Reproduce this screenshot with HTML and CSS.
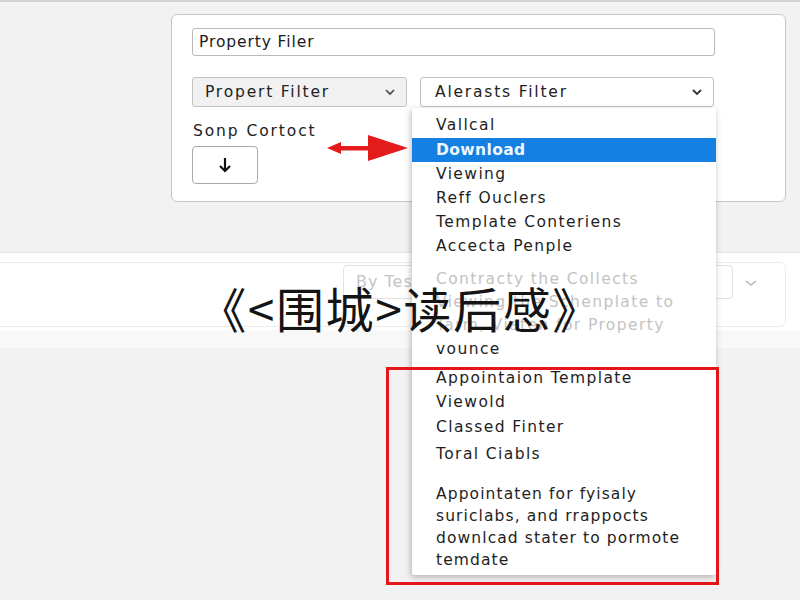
FILE: index.html
```html
<!DOCTYPE html>
<html>
<head>
<meta charset="utf-8">
<link rel="stylesheet" href="styles.css">
</head>
<body>
<div class="top">
  <div class="card">
    <div class="text-input">Property Filer</div>
    <div class="select-row">
      <div class="select select-gray"><span>Propert Filter</span>
        <svg class="chev" width="12" height="8" viewBox="0 0 12 8"><polyline points="2,2 6,6 10,2" fill="none" stroke="#444" stroke-width="1.6"/></svg>
      </div>
      <div class="select select-white"><span>Alerasts Filter</span>
        <svg class="chev" width="12" height="8" viewBox="0 0 12 8"><polyline points="2,2 6,6 10,2" fill="none" stroke="#333" stroke-width="1.8"/></svg>
        <div class="dropdown">
          <div class="opt first">Vallcal</div>
          <div class="opt active">Download</div>
          <div class="opt">Viewing</div>
          <div class="opt">Reff Ouclers</div>
          <div class="opt">Template Conteriens</div>
          <div class="opt">Accecta Penple</div>
          <div class="faded-group">
            <div class="opt faded">Contracty the Collects</div>
            <div class="opt faded">Viewing the Schenplate to</div>
            <div class="opt faded">Tarm, Viaten for Property</div>
          </div>
          <div class="opt">vounce</div>
          <div class="opt gap5">Appointaion Template</div>
          <div class="opt">Viewold</div>
          <div class="opt gap1">Classed Finter</div>
          <div class="opt gap3">Toral Ciabls</div>
          <div class="para">Appointaten for fyisaly<br>suriclabs, and rrappocts<br>downlcad stater to pormote<br>temdate</div>
        </div>
      </div>
    </div>
    <div class="label">Sonp Cortoct</div>
    <div class="btn">
      <svg width="16" height="18" viewBox="0 0 16 18"><line x1="8" y1="2" x2="8" y2="15" stroke="#111" stroke-width="2.2"/><polyline points="3,10 8,15 13,10" fill="none" stroke="#111" stroke-width="2.2"/></svg>
    </div>
  </div>
</div>
<div class="band">
  <div class="band-card">
    <div class="faint-input">By Tes</div>
    <svg class="faint-chev" width="14" height="8" viewBox="0 0 14 8"><polyline points="2,2 7,6 12,2" fill="none" stroke="#b5b5b5" stroke-width="1.6"/></svg>
  </div>
</div>
<div class="strip"></div>

<svg class="red-arrow" width="90" height="32" viewBox="0 0 90 32">
  <polygon points="2,16 16,10 16,22" fill="#e31b1b"/>
  <rect x="14" y="14" width="31" height="4.5" fill="#e31b1b"/>
  <polygon points="43,3 83,16 43,29" fill="#e31b1b"/>
</svg>
<div class="red-box"></div>
<div class="title">《&lt;围城&gt;读后感》</div>
</body>
</html>
```

FILE: styles.css
```css
html, body {
  margin: 0;
  padding: 0;
}
body {
  width: 800px;
  height: 600px;
  overflow: hidden;
  background: #f2f2f2;
  border-top: 2px solid #d2d2d2;
  box-sizing: border-box;
  position: relative;
  font-family: "DejaVu Sans", "Liberation Sans", sans-serif;
  color: #222;
}
.top {
  padding: 12px 14px 0 171px;
}
.card {
  width: 615px;
  height: 188px;
  box-sizing: border-box;
  background: #fff;
  border: 1px solid #c6c6c6;
  border-radius: 6px;
  padding: 13px 20px 0 20px;
}
.text-input {
  width: 523px;
  height: 28px;
  box-sizing: border-box;
  border: 1px solid #b9b9b9;
  border-radius: 3px;
  font-size: 15.5px;
  letter-spacing: 0.9px;
  line-height: 26px;
  padding-left: 6px;
  color: #1a1a1a;
}
.select-row {
  display: flex;
  gap: 13px;
  margin-top: 21px;
}
.select {
  height: 30px;
  box-sizing: border-box;
  border: 1px solid #c3c3c3;
  border-radius: 3px;
  display: flex;
  align-items: center;
  justify-content: space-between;
  font-size: 15.5px;
  letter-spacing: 1.8px;
  position: relative;
}
.select-gray {
  width: 215px;
  background: #f1f1f1;
  padding: 0 10px 0 12px;
}
.select-white {
  width: 294px;
  background: #fff;
  padding: 0 10px 0 14px;
}
.chev {
  display: block;
}
.label {
  margin-top: 14px;
  font-size: 15.5px;
  letter-spacing: 1.9px;
  line-height: 20px;
  padding-left: 1px;
}
.btn {
  margin-top: 5px;
  width: 66px;
  height: 38px;
  box-sizing: border-box;
  border: 1px solid #a9a9a9;
  border-radius: 4px;
  display: flex;
  align-items: center;
  justify-content: center;
}
.dropdown {
  position: absolute;
  left: -9px;
  top: 30px;
  width: 304px;
  height: 467px;
  box-sizing: border-box;
  background: #fff;
  box-shadow: -1px 2px 6px rgba(0,0,0,0.28);
  border-radius: 2px;
  padding-top: 5px;
  z-index: 5;
  letter-spacing: 1.4px;
  font-size: 15.5px;
  color: #1e1e1e;
}
.opt {
  height: 24px;
  line-height: 24px;
  padding-left: 24px;
  white-space: nowrap;
}
.opt.first {
  height: 25px;
}
.opt.active {
  background: #1380e2;
  color: #eef6ff;
  font-weight: bold;
  letter-spacing: 0.4px;
}
.faded-group {
  margin-top: 10px;
}
.opt.faded {
  height: 23px;
  line-height: 23px;
  color: #c3c3c3;
}
.gap5 { margin-top: 5px; }
.gap1 { margin-top: 1px; }
.gap3 { margin-top: 3px; }
.para {
  margin-top: 17px;
  padding-left: 24px;
  line-height: 22px;
  letter-spacing: 1.1px;
}
.band {
  margin-top: 50px;
  border-top: 1px solid #e3e3e3;
  background: #fff;
  padding: 9px 14px 3px 0;
}
.band-card {
  height: 65px;
  box-sizing: border-box;
  border: 1px solid #ececec;
  border-left: none;
  border-radius: 0 6px 6px 0;
  display: flex;
  align-items: flex-start;
  padding: 2px 0 0 343px;
}
.faint-input {
  width: 390px;
  height: 34px;
  box-sizing: border-box;
  border: 1px solid #e2e2e2;
  border-radius: 4px;
  font-size: 16px;
  letter-spacing: 1px;
  color: #c4c4c4;
  line-height: 32px;
  padding-left: 12px;
}
.faint-chev {
  margin: 14px 0 0 11px;
}
.strip {
  height: 18px;
  background: #f8f8f8;
}
.red-arrow {
  position: absolute;
  left: 325px;
  top: 130px;
  z-index: 6;
}
.red-box {
  position: absolute;
  left: 386px;
  top: 365px;
  width: 333px;
  height: 218px;
  box-sizing: border-box;
  border: 3px solid #e3161a;
  z-index: 6;
}
.title {
  position: absolute;
  left: 0;
  right: 0;
  top: 279px;
  text-align: center;
  font-family: "Noto Sans CJK SC", sans-serif;
  font-size: 48px;
  line-height: 52px;
  letter-spacing: 1.6px;
  color: #141414;
  z-index: 7;
}
```
